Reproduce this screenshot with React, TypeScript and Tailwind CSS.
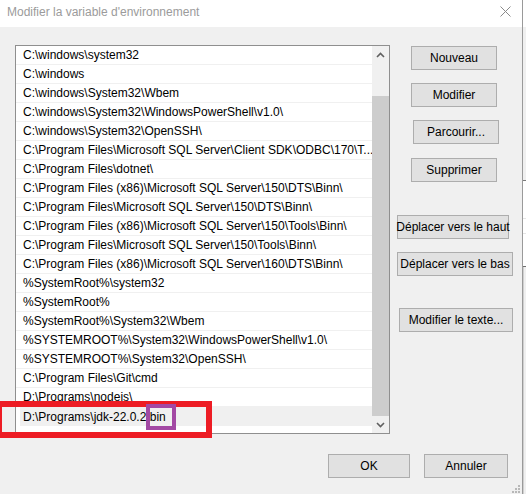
import React from 'react';

const paths = [
  'C:\\windows\\system32',
  'C:\\windows',
  'C:\\windows\\System32\\Wbem',
  'C:\\windows\\System32\\WindowsPowerShell\\v1.0\\',
  'C:\\windows\\System32\\OpenSSH\\',
  'C:\\Program Files\\Microsoft SQL Server\\Client SDK\\ODBC\\170\\T...',
  'C:\\Program Files\\dotnet\\',
  'C:\\Program Files (x86)\\Microsoft SQL Server\\150\\DTS\\Binn\\',
  'C:\\Program Files\\Microsoft SQL Server\\150\\DTS\\Binn\\',
  'C:\\Program Files (x86)\\Microsoft SQL Server\\150\\Tools\\Binn\\',
  'C:\\Program Files\\Microsoft SQL Server\\150\\Tools\\Binn\\',
  'C:\\Program Files (x86)\\Microsoft SQL Server\\160\\DTS\\Binn\\',
  '%SystemRoot%\\system32',
  '%SystemRoot%',
  '%SystemRoot%\\System32\\Wbem',
  '%SYSTEMROOT%\\System32\\WindowsPowerShell\\v1.0\\',
  '%SYSTEMROOT%\\System32\\OpenSSH\\',
  'C:\\Program Files\\Git\\cmd',
  'D:\\Programs\\nodejs\\',
];

const font = { fontFamily: '"Liberation Sans", Arial, sans-serif' };

const Btn: React.FC<{ label: string; className?: string }> = ({ label, className = '' }) => (
  <div
    className={`h-[24px] flex items-center justify-center whitespace-nowrap bg-[#e1e1e1] border border-[#adadad] text-[12px] text-black ${className}`}
  >
    {label}
  </div>
);

const Chevron: React.FC<{ up?: boolean }> = ({ up }) => (
  <svg width="9" height="6" viewBox="0 0 9 6">
    <path
      d={up ? 'M1 5 L4.5 1.5 L8 5' : 'M1 1 L4.5 4.5 L8 1'}
      fill="none"
      stroke="#606060"
      strokeWidth="1.6"
    />
  </svg>
);

export default function App() {
  return (
    <div className="w-[526px] h-[494px] flex overflow-hidden relative" style={font}>
      {/* dialog window */}
      <div className="w-[523px] h-full flex flex-col border-r border-[#9a9a9a] shrink-0">
        <div className="h-[27px] bg-white flex items-center justify-between pl-[7px] pr-[11px] pb-[4px]">
          <span className="text-[12px] text-[#9b9b9b]">Modifier la variable d'environnement</span>
          <svg width="11" height="11" viewBox="0 0 11 11">
            <path d="M0.5 0.5 L10.5 10.5 M10.5 0.5 L0.5 10.5" stroke="#8a8a8a" strokeWidth="1" />
          </svg>
        </div>

        <div className="flex-1 bg-[#f0f0f0] relative">
          <div className="flex pt-[18px] pl-[15px]">
            {/* list */}
            <div className="w-[375px] h-[389px] border border-[#8f8f8f] bg-white flex">
              <div className="w-[356px] flex flex-col">
                {paths.map((p) => (
                  <div
                    key={p}
                    className="h-[19px] border-b border-[#f0f0f0] pl-[7px] pr-[4px] flex items-center text-[12px] text-black whitespace-nowrap overflow-hidden"
                  >
                    {p}
                  </div>
                ))}
                <div className="h-[19px] pl-[4px] flex">
                  <div className="flex-1 bg-[#f0f0f0] pl-[3px] flex items-center text-[12px] text-black whitespace-nowrap">
                    D:\Programs\jdk-22.0.2\bin
                  </div>
                </div>
              </div>
              {/* scrollbar */}
              <div className="w-[17px] flex flex-col bg-[#f0f0f0]">
                <div className="h-[17px] flex items-center justify-center">
                  <Chevron up />
                </div>
                <div className="h-[33px]" />
                <div className="h-[320px] bg-[#cdcdcd]" />
                <div className="h-[17px] flex items-center justify-center">
                  <Chevron />
                </div>
              </div>
            </div>

            {/* side buttons */}
            <div className="flex flex-col ml-[7px] mt-[1px]">
              <Btn label="Nouveau" className="w-[86px] ml-[14px]" />
              <Btn label="Modifier" className="w-[86px] ml-[14px] mt-[13px]" />
              <Btn label="Parcourir..." className="w-[86px] ml-[16px] mt-[13px]" />
              <Btn label="Supprimer" className="w-[86px] ml-[14px] mt-[14px]" />
              <Btn label="Déplacer vers le haut" className="w-[112px] mt-[33px]" />
              <Btn label="Déplacer vers le bas" className="w-[116px] mt-[13px]" />
              <Btn label="Modifier le texte..." className="w-[114px] ml-[2px] mt-[32px]" />
            </div>
          </div>

          <div className="flex justify-end gap-[14px] pr-[14px] mt-[20px]">
            <Btn label="OK" className="w-[82px]" />
            <Btn label="Annuler" className="w-[84px]" />
          </div>

          {/* resize grip */}
          <svg className="absolute right-[2px] bottom-[1px]" width="8" height="8" viewBox="0 0 8 8">
            <g fill="#b8b8b8">
              <rect x="6" y="0" width="2" height="2" />
              <rect x="3" y="3" width="2" height="2" />
              <rect x="6" y="3" width="2" height="2" />
              <rect x="0" y="6" width="2" height="2" />
              <rect x="3" y="6" width="2" height="2" />
              <rect x="6" y="6" width="2" height="2" />
            </g>
          </svg>
        </div>
      </div>

      {/* window behind, peeking on the right */}
      <div className="w-[3px] h-full flex flex-col">
        <div className="h-[27px] bg-white" />
        <div className="h-[153px] bg-[#f0f0f0]" />
        <div className="h-[1px] bg-[#7a7a7a]" />
        <div className="h-[38px] bg-white border-b border-[#e5e5e5]" />
        <div className="h-[15px] bg-white border-b border-[#e5e5e5]" />
        <div className="h-[33px] bg-white border-b border-[#6f6f6f]" />
        <div className="flex-1 bg-[#f0f0f0] border-l border-[#d0d0d0]" />
      </div>

      {/* annotations */}
      <div className="absolute left-[-4px] top-[401px] w-[216px] h-[37px] border-[6px] border-[#ed1c24]" />
      <div className="absolute left-[146px] top-[404px] w-[30px] h-[26px] border-[4px] border-[#a349a4]" />
    </div>
  );
}
